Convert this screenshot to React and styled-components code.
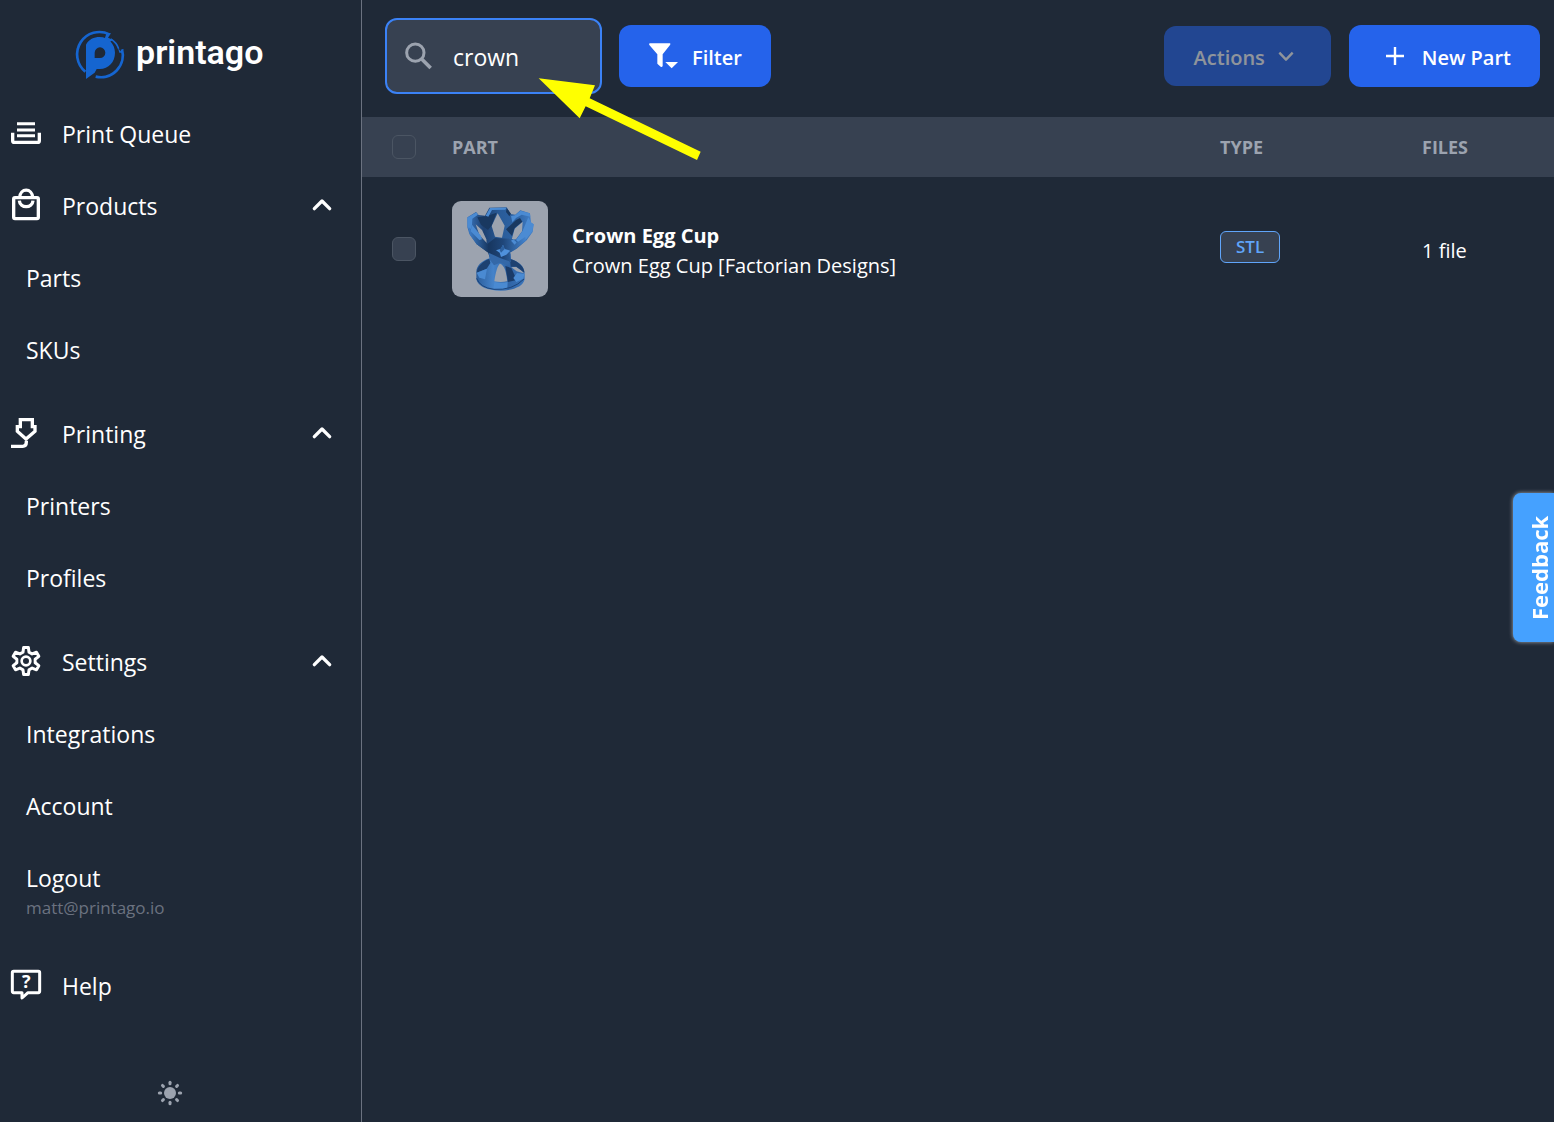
import React, { useState } from "react";
import styled, { createGlobalStyle } from "styled-components";

const GlobalStyle = createGlobalStyle`
  *, *::before, *::after { box-sizing: border-box; }
  body {
    margin: 0;
    background: #1f2937;
    color: #fff;
    font-family: "Segoe UI", "Open Sans", "Noto Sans", sans-serif;
  }
  button, input { font: inherit; color: inherit; }
  svg { display: block; flex: none; overflow: visible; }
`;

const Shell = styled.div`
  display: flex;
  min-height: 100vh;
`;

/* ---------- sidebar ---------- */

const Sidebar = styled.aside`
  display: flex;
  flex-direction: column;
  flex: none;
  width: 362px;
  border-right: 1px solid #6b7280;
`;

const Brand = styled.a`
  display: flex;
  align-items: flex-start;
  gap: 12px;
  height: 98px;
  padding: 30px 21px 0 76px;
  color: #fff;
  text-decoration: none;
`;

const BrandName = styled.span`
  font-family: Roboto, sans-serif;
  font-size: 34px;
  font-weight: 600;
  line-height: 44px;
`;

const Nav = styled.nav`
  display: flex;
  flex-direction: column;
`;

const Group = styled.div`
  display: flex;
  flex-direction: column;
  margin-bottom: 12px;
`;

const itemText = `
  font-size: 23px;
  line-height: 36px;
  color: #fff;
  text-decoration: none;
`;

const TopLink = styled.a`
  ${itemText}
  display: flex;
  align-items: center;
  gap: 21px;
  height: 72px;
  padding: 0 29px 0 11px;
`;

const GroupToggle = styled.button`
  ${itemText}
  display: flex;
  align-items: center;
  gap: 21px;
  height: 72px;
  padding: 0 29px 0 11px;
  border: 0;
  background: none;
  text-align: left;
  cursor: pointer;
`;

const ToggleLabel = styled.span`
  flex: 1;
`;

const SubLink = styled.a`
  ${itemText}
  display: flex;
  flex-direction: column;
  padding: 18px 26px;
`;

const Email = styled.span`
  font-size: 17px;
  line-height: 24px;
  color: #6b7280;
`;

const SidebarFooter = styled.div`
  display: flex;
  justify-content: center;
  margin-top: auto;
  padding: 12px 21px 17px 0;
`;

const ThemeButton = styled.button`
  padding: 0;
  border: 0;
  background: none;
  color: #9ca3af;
  cursor: pointer;
`;

/* ---------- main area ---------- */

const Main = styled.main`
  position: relative;
  flex: 1;
  min-width: 0;
`;

const Toolbar = styled.div`
  display: flex;
  align-items: center;
  gap: 17px;
  padding: 18px 14px 23px 23px;
`;

const SearchBox = styled.label`
  display: flex;
  align-items: center;
  gap: 21px;
  width: 217px;
  height: 76px;
  padding: 0 18px;
  border: 2px solid #3b82f6;
  border-radius: 12px;
  background: #374151;
  color: #9ca3af;
`;

const SearchInput = styled.input`
  flex: 1;
  min-width: 0;
  padding: 2px 0 0;
  border: 0;
  outline: 0;
  background: transparent;
  color: #fff;
  font-size: 23px;
  line-height: 36px;
`;

const ToolButton = styled.button`
  display: flex;
  align-items: center;
  gap: ${(p) => p.$gap};
  height: ${(p) => (p.disabled ? "60px" : "62px")};
  padding: ${(p) => p.$pad};
  border: 0;
  border-radius: 12px;
  background: #2563eb;
  color: #fff;
  font-size: 20px;
  font-weight: 600;
  line-height: 30px;
  white-space: nowrap;
  opacity: ${(p) => (p.disabled ? 0.5 : 1)};
  cursor: pointer;
`;

const ButtonText = styled.span`
  padding-top: 3px;
`;

const ToolbarEnd = styled.div`
  display: flex;
  align-items: center;
  gap: 18px;
  margin-left: auto;
`;

const Table = styled.table`
  width: 100%;
  table-layout: fixed;
  border-collapse: collapse;
`;

const Th = styled.th`
  width: ${(p) => p.$width || "auto"};
  height: 60px;
  padding: ${(p) => (p.$pick ? "0 0 0 30px" : "0")};
  background: #374151;
  color: #9ca3af;
  font-size: 18px;
  font-weight: 700;
  text-align: left;
  text-transform: uppercase;
`;

const Td = styled.td`
  height: 144px;
  padding: ${(p) => (p.$pick ? "0 0 0 30px" : "0")};
  font-size: 20px;
  line-height: 30px;
`;

const Checkbox = styled.input`
  display: block;
  appearance: none;
  width: 24px;
  height: 24px;
  margin: 0;
  border: 1px solid #4b5563;
  border-radius: 6px;
  background: #374151;
  &:checked { background: #2563eb; }
`;

const Part = styled.div`
  display: flex;
  align-items: center;
  gap: 24px;
`;

const Thumb = styled.div`
  flex: none;
  width: 96px;
  height: 96px;
  border-radius: 9px;
  overflow: hidden;
  background: #9ca3af;
`;

const PartText = styled.div`
  display: flex;
  flex-direction: column;
  padding-top: 3px;
`;

const PartName = styled.strong`
  font-size: 20px;
  font-weight: 700;
`;

const FileCount = styled.div`
  padding-top: 3px;
`;

const BadgeLine = styled.div`
  display: flex;
  padding-bottom: 4px;
`;

const Badge = styled.span`
  padding: 0 15px;
  border: 1px solid #60a5fa;
  border-radius: 6px;
  background: #374151;
  color: #60a5fa;
  font-size: 17px;
  font-weight: 600;
  line-height: 30px;
`;

const Pointer = styled.svg`
  position: absolute;
  left: 176px;
  top: 77px;
  pointer-events: none;
`;

const Feedback = styled.button`
  position: fixed;
  right: 0;
  top: 493px;
  height: 149px;
  width: 41px;
  padding: 0 12px 0 0;
  border: 0;
  border-radius: 0 8px 8px 0;
  background: #45a1ff;
  box-shadow: 0 0 4px rgba(255, 255, 255, 0.6);
  color: #fff;
  font-size: 22px;
  font-weight: 700;
  line-height: 28px;
  writing-mode: vertical-rl;
  transform: rotate(180deg);
  cursor: pointer;
`;

/* ---------- icons ---------- */

const NavSvg = ({ y, children }) => (
  <svg width="30" height="30" viewBox={`33 ${y} 90 90`} fill="none" stroke="currentColor" strokeWidth="10" aria-hidden="true">
    {children}
  </svg>
);

const QueueIcon = () => (
  <NavSvg y={27}>
    <path d="M51 41H105M51 60H105M51 77H105" strokeWidth="9" />
    <path d="M38 68V92Q38 97 43 97H113Q118 97 118 92V68" />
  </NavSvg>
);

const BagIcon = () => (
  <NavSvg y={243}>
    <rect x="41" y="263" width="74" height="63" rx="4" />
    <path d="M59 263C60 233 97 233 98 263M58 272C60 296 97 296 99 272" />
  </NavSvg>
);

const NozzleIcon = () => (
  <NavSvg y={27}>
    <path d="M61 29H97V50H105V64L78 87L52 64V50H61Z" />
    <path d="M79 92V97Q79 109 68 109H33" />
  </NavSvg>
);

const gearPoints = Array.from({ length: 6 }, (_, i) => {
  const at = (deg, r) => {
    const a = ((i * 60 - 90 + deg) * Math.PI) / 180;
    return `${(78 + r * Math.cos(a)).toFixed(1)},${(63 + r * Math.sin(a)).toFixed(1)}`;
  };
  return [at(-19, 28), at(-10, 41), at(10, 41), at(19, 28)].join(" ");
}).join(" ");

const GearIcon = () => (
  <NavSvg y={21}>
    <polygon points={gearPoints} strokeWidth="9" strokeLinejoin="round" />
    <circle cx="78" cy="63" r="13" strokeWidth="8" />
  </NavSvg>
);

const HelpIcon = () => (
  <NavSvg y={333}>
    <path d="M41 334H115Q119 334 119 338V394Q119 398 115 398H84L66 414V398H41Q37 398 37 394V338Q37 334 41 334Z" strokeWidth="9" strokeLinejoin="round" />
    <text x="79" y="384" textAnchor="middle" fontSize="54" fontWeight="700" fill="currentColor" stroke="none">?</text>
  </NavSvg>
);

const ChevronUp = () => (
  <svg width="20" height="14" viewBox="936 46 60 42" fill="none" stroke="currentColor" strokeWidth="10" strokeLinecap="round" strokeLinejoin="round" aria-hidden="true">
    <path d="M943 75L966 52L989 75" />
  </svg>
);

const ChevronDown = () => (
  <svg width="14" height="9" viewBox="387 125 42 27" fill="none" stroke="currentColor" strokeWidth="7" strokeLinejoin="round" aria-hidden="true">
    <path d="M388 127L408 148L428 127" />
  </svg>
);

const PlusIcon = () => (
  <svg width="18" height="18" viewBox="0 0 18 18" stroke="currentColor" strokeWidth="2.4" aria-hidden="true">
    <path d="M9 0V18M0 9H18" />
  </svg>
);

const SearchIcon = () => (
  <svg width="27" height="27" viewBox="90 112 81 81" fill="none" stroke="currentColor" strokeWidth="9" aria-hidden="true">
    <circle cx="121" cy="141" r="26" />
    <path d="M140 160L167 187" strokeWidth="11" />
  </svg>
);

const FilterIcon = () => (
  <svg width="29" height="26" viewBox="825 112 87 78" fill="currentColor" aria-hidden="true">
    <path d="M827 113H888Q891 115 888 118L866 146V181Q864 185 860 183L850 174V146L826 118Q824 115 827 113Z" />
    <path d="M874 169H912L893 188Z" />
  </svg>
);

const SunIcon = () => (
  <svg width="24" height="24" viewBox="-36 -36 72 72" stroke="currentColor" strokeWidth="9" strokeLinecap="round" aria-hidden="true">
    <circle r="18" fill="currentColor" stroke="none" />
    {[0, 45, 90, 135, 180, 225, 270, 315].map((a) => (
      <path key={a} d="M0 -32V-28" transform={`rotate(${a})`} />
    ))}
  </svg>
);

const Logo = () => (
  <svg width="48" height="50" viewBox="48 30 144 150" aria-hidden="true">
    <g fill="none" stroke="#1565d0" strokeWidth="8">
      <path d="M76 155A67 67 0 0 1 148 43" />
      <path d="M186 88A66 66 0 0 1 107 170" />
      <path d="M152 57A54 54 0 0 1 176 86" strokeWidth="5" />
    </g>
    <path fill="#1565d0" d="M140 38L153 40L144 53L160 60L148 66L134 56ZM174 84L182 94L190 86L188 98L178 98Z" />
    <path fill="#1565d0" fillRule="evenodd" d="M78 74C86 58 102 51 119 51C145 51 165 72 165 98C165 126 146 146 119 147H110L104 158L78 177ZM120 82A16 16 0 0 0 104 98V114H120A16 16 0 0 0 120 82Z" />
  </svg>
);

const EggCup = () => (
  <svg width="96" height="96" viewBox="216 33 288 288" role="img" aria-label="Crown Egg Cup">
    <defs>
      <linearGradient id="bowl" x1="0" y1="0" x2="1" y2="0">
        <stop offset="0" stopColor="#3b76bd" />
        <stop offset=".25" stopColor="#1d4070" />
        <stop offset=".5" stopColor="#2a5c99" />
        <stop offset=".75" stopColor="#2d63a5" />
        <stop offset="1" stopColor="#4582c9" />
      </linearGradient>
      <linearGradient id="front" x1="0" y1="0" x2="1" y2="0">
        <stop offset="0" stopColor="#3f7fca" />
        <stop offset=".35" stopColor="#17365f" />
        <stop offset=".6" stopColor="#1f4679" />
        <stop offset="1" stopColor="#4384cf" />
      </linearGradient>
      <linearGradient id="foot" x1="0" y1="0" x2="1" y2="0">
        <stop offset="0" stopColor="#2b5d9b" />
        <stop offset=".35" stopColor="#4583ca" />
        <stop offset=".65" stopColor="#2f63a4" />
        <stop offset="1" stopColor="#3a74ba" />
      </linearGradient>
    </defs>
    <path fill="url(#foot)" fillRule="evenodd" d="M328 190L392 190L393 207C420 216 434 232 434 252V268C430 291 396 302 361 302C324 302 293 290 289 268V246C289 228 304 213 328 205ZM360 221C353 226 347 246 343 274Q362 278 382 274C379 246 374 226 360 221ZM394 232L408 230Q423 238 432 250L410 244Z" />
    <path fill="#1d4171" d="M328 206L331 219L320 236L290 248C292 228 309 213 328 206ZM390 207C418 214 434 234 433 248L409 230L392 230Z" />
    <path fill="#1a3b69" d="M376 228L394 234L410 270L384 276Z" />
    <path fill="#4a8ad2" d="M290 248L321 236L315 268L298 263ZM400 264L411 249L433 252L430 266L409 276ZM343 276Q362 280 383 276L382 297Q360 302 340 296Z" />
    <path fill="none" stroke="#1c4378" strokeWidth="3" d="M290 265Q300 293 342 298Q397 302 432 267" />
    <path fill="url(#bowl)" fillRule="evenodd" d="M262 82L288 66L296 75L315 77L328 53L380 52L392 72L406 74L421 61L450 70L453 98L461 103L458 126L440 151L410 176L390 188L392 216L361 213L328 199L325 188L290 163L268 132L262 112ZM353 70L335 108L345 140L366 143L374 107ZM428 95L404 116L395 149L408 148L426 124ZM287 103L299 137L320 159L319 148L306 120Z" />
    <path fill="#193860" d="M314 80L350 68L334 108L324 120L303 104L292 82ZM380 54L393 71L388 79L378 66ZM408 90L420 84L427 95L404 114L396 138L378 118Z" />
    <path fill="#4b8bd3" d="M262 83L289 67L294 74L277 86L276 104L272 128L263 110ZM317 77L330 54L379 53L376 59L336 60L325 80ZM393 78L405 76L421 62L449 70L451 80L425 74L408 84L397 97ZM445 82L453 97L461 103L457 124L440 146L418 160L408 150L428 122Z" />
    <path fill="url(#front)" d="M266 112L280 122L300 137L322 162L345 144L398 147L410 158L436 140L438 151L405 178L388 188L392 216L361 213L328 199L325 188L290 163L270 135Z" />
    <path fill="#4b8bd3" d="M276 104L303 137L306 148L298 150L272 124ZM400 148L410 157L404 164L393 152Z" />
    <path fill="#3468a8" d="M326 188L360 204L388 214L386 226L360 218L342 226L330 210Z" />
    <path fill="#4f91dc" d="M369 164L374 177L391 182L379 194L363 201L359 188L348 181L363 176Z" />
    <path fill="#2c609f" d="M369 164L374 177L363 188L359 180Z" />
  </svg>
);

/* ---------- page ---------- */

const groups = [
  { label: "Products", Icon: BagIcon, items: ["Parts", "SKUs"] },
  { label: "Printing", Icon: NozzleIcon, items: ["Printers", "Profiles"] },
  { label: "Settings", Icon: GearIcon, items: ["Integrations", "Account", "Logout"] },
];

export default function App() {
  const [query, setQuery] = useState("crown");
  return (
    <>
      <GlobalStyle />
      <Shell>
        <Sidebar>
          <Brand href="#home">
            <Logo />
            <BrandName>printago</BrandName>
          </Brand>
          <Nav aria-label="Main">
            <TopLink href="#queue">
              <QueueIcon />
              Print Queue
            </TopLink>
            {groups.map(({ label, Icon, items }) => (
              <Group key={label}>
                <GroupToggle type="button" aria-expanded="true">
                  <Icon />
                  <ToggleLabel>{label}</ToggleLabel>
                  <ChevronUp />
                </GroupToggle>
                {items.map((item) => (
                  <SubLink key={item} href={`#${item.toLowerCase()}`}>
                    {item}
                    {item === "Logout" && <Email>matt@printago.io</Email>}
                  </SubLink>
                ))}
              </Group>
            ))}
            <TopLink href="#help">
              <HelpIcon />
              Help
            </TopLink>
          </Nav>
          <SidebarFooter>
            <ThemeButton type="button" aria-label="Switch theme">
              <SunIcon />
            </ThemeButton>
          </SidebarFooter>
        </Sidebar>

        <Main>
          <Toolbar>
            <SearchBox>
              <SearchIcon />
              <SearchInput
                type="text"
                aria-label="Search parts"
                value={query}
                onChange={(e) => setQuery(e.target.value)}
              />
            </SearchBox>
            <ToolButton type="button" $gap="14px" $pad="0 29px 0 30px">
              <FilterIcon />
              <ButtonText>Filter</ButtonText>
            </ToolButton>
            <ToolbarEnd>
              <ToolButton type="button" disabled $gap="14px" $pad="0 38px 0 30px">
                <ButtonText>Actions</ButtonText>
                <ChevronDown />
              </ToolButton>
              <ToolButton type="button" $gap="18px" $pad="0 29px 0 37px">
                <PlusIcon />
                <ButtonText>New Part</ButtonText>
              </ToolButton>
            </ToolbarEnd>
          </Toolbar>

          <Table>
            <thead>
              <tr>
                <Th $width="90px" $pick>
                  <Checkbox type="checkbox" aria-label="Select all parts" />
                </Th>
                <Th>Part</Th>
                <Th $width="202px">Type</Th>
                <Th $width="132px">Files</Th>
              </tr>
            </thead>
            <tbody>
              <tr>
                <Td $pick>
                  <Checkbox type="checkbox" aria-label="Select Crown Egg Cup" />
                </Td>
                <Td>
                  <Part>
                    <Thumb>
                      <EggCup />
                    </Thumb>
                    <PartText>
                      <PartName>Crown Egg Cup</PartName>
                      <span>Crown Egg Cup [Factorian Designs]</span>
                    </PartText>
                  </Part>
                </Td>
                <Td>
                  <BadgeLine>
                    <Badge>STL</Badge>
                  </BadgeLine>
                </Td>
                <Td>
                  <FileCount>1 file</FileCount>
                </Td>
              </tr>
            </tbody>
          </Table>

          <Pointer width="164" height="84" viewBox="489 216 492 252" fill="#ffff00" aria-hidden="true">
            <path d="M491 220L660 241L644 280L977 440L966 465L632 304L614 340Z" />
          </Pointer>
        </Main>
      </Shell>
      <Feedback type="button">Feedback</Feedback>
    </>
  );
}
